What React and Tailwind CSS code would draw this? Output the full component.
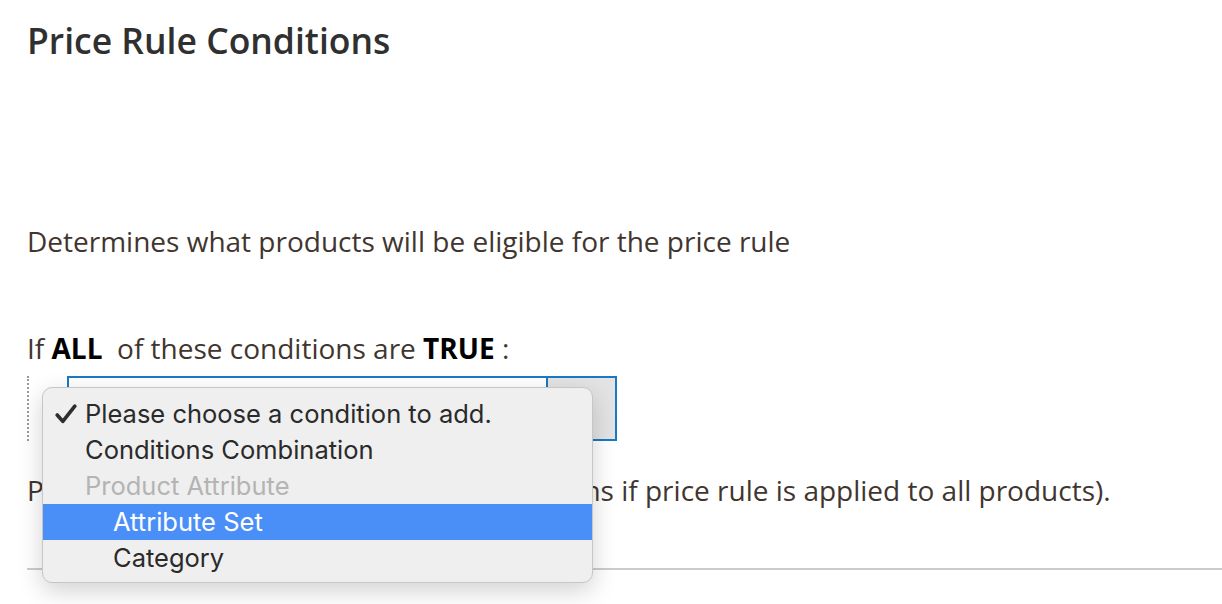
import React from "react"

function Check() {
  return (
    <svg width="22" height="20" viewBox="0 0 22 20" className="shrink-0">
      <path d="M2.2 11 L7.8 17.4 L19.8 2.2" fill="none" stroke="#2e2e2e" strokeWidth="3.6" strokeLinecap="round" strokeLinejoin="round" />
    </svg>
  )
}

function MenuItem({ children, indent, muted, active, check }) {
  return (
    <div
      className={
        "flex h-[36px] items-center " +
        (active ? "bg-[#4a8ff7] text-white " : muted ? "text-[#b4b4b4] " : "text-[#2a2a2a] ")
      }
    >
      <div className="flex w-[42px] items-center pl-[12px]">{check && <Check />}</div>
      <span className={indent ? "pl-[28px]" : ""}>{children}</span>
    </div>
  )
}

export default function App() {
  return (
    <div className="relative h-[604px] w-[1222px] overflow-hidden bg-white font-['Open_Sans',sans-serif] text-[#41362f]">
      <div className="pl-[27px] pt-[18px]">
        <h2 className="text-[35.5px] font-semibold leading-[44px] text-[#303030]">Price Rule Conditions</h2>
        <p className="mt-[160px] text-[28px] leading-[38px]">
          Determines what products will be eligible for the price rule
        </p>
        <p className="mt-[69px] text-[28px] leading-[38px]">
          If <b className="font-bold text-black">ALL</b>&nbsp; of these conditions are{" "}
          <b className="font-bold text-black">TRUE</b> :
        </p>
        <div className="mt-[9px] flex h-[65px]">
          <div className="w-[2px] border-l-2 border-dotted border-[#9a9a9a]" />
          <div className="ml-[38px] flex w-[550px] border-2 border-[#1979c3]">
            <div className="flex-1 bg-white" />
            <div className="w-[69px] border-l-2 border-[#1979c3] bg-[#e3e3e3]" />
          </div>
        </div>
        <p className="mt-[30px] text-[28px] leading-[38px]">
          Products to use rule on (don't add conditions if price rule is applied to all products).
        </p>
        <div className="mt-[59px] h-[2px] bg-[#cccccc]" />
      </div>

      <div className="absolute left-[42px] top-[387px] w-[551px] rounded-[10px] border border-[#c6c6c6] bg-[#efefef] pb-[6px] pt-[8px] font-['Inter',sans-serif] text-[25.5px] shadow-[0_8px_24px_rgba(0,0,0,0.18)]">
        <MenuItem check>Please choose a condition to add.</MenuItem>
        <MenuItem>Conditions Combination</MenuItem>
        <MenuItem muted>Product Attribute</MenuItem>
        <MenuItem indent active>Attribute Set</MenuItem>
        <MenuItem indent>Category</MenuItem>
      </div>
    </div>
  )
}
